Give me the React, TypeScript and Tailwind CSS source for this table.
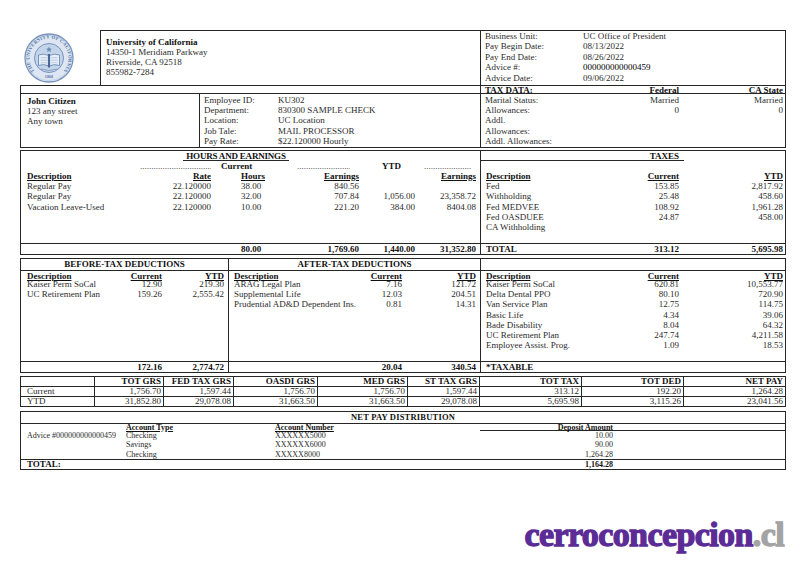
import React from 'react';

function Seal() {
  return (
    <svg width="50" height="50" viewBox="0 0 50 50">
      <defs>
        <path id="sealRing" d="M25,44.5 A19.5,19.5 0 0,1 25,5.5 A19.5,19.5 0 0,1 25,44.5" />
      </defs>
      <circle cx="25" cy="25" r="24" fill="#dde6f2" stroke="#7893bd" strokeWidth="1.3" />
      <circle cx="25" cy="25" r="22.4" fill="none" stroke="#9bb1d2" strokeWidth="0.7" strokeDasharray="0.9 0.7" />
      <text fontSize="4.8" fill="#5677a8" fontFamily="Liberation Serif, serif" fontWeight="bold" letterSpacing="0.3" textAnchor="middle">
        <textPath href="#sealRing" startOffset="50%">
          THE UNIVERSITY OF CALIFORNIA
        </textPath>
      </text>
      <text x="25" y="45" fontSize="4.2" fill="#5677a8" fontFamily="Liberation Serif, serif" fontWeight="bold" textAnchor="middle">
        1868
      </text>
      <circle cx="25" cy="25" r="14.5" fill="#c4d4e9" stroke="#7893bd" strokeWidth="1" />
      <path d="M25 13.5 l0.9 2 2.1 0.2 -1.6 1.4 0.5 2.1 -1.9 -1.1 -1.9 1.1 0.5 -2.1 -1.6 -1.4 2.1 -0.2z" fill="#6f8cb8" />
      <path
        d="M14.5 22 Q19.5 20 25 22.5 Q30.5 20 35.5 22 L35.5 32.5 Q30.5 30.5 25 33 Q19.5 30.5 14.5 32.5 Z"
        fill="#e8eef7"
        stroke="#5f7fae"
        strokeWidth="0.8"
      />
      <path d="M25 21 L25 34.5" stroke="#47679a" strokeWidth="2.2" />
      <path d="M16.5 25 Q20 24 23 25 M16.5 27.5 Q20 26.5 23 27.5 M16.5 30 Q20 29 23 30 M27 25 Q30 24 33.5 25 M27 27.5 Q30 26.5 33.5 27.5 M27 30 Q30 29 33.5 30" stroke="#8ea7cb" strokeWidth="0.5" fill="none" />
      <path d="M17 36 Q25 39 33 36" stroke="#7893bd" strokeWidth="0.8" fill="none" />
    </svg>
  );
}

const emp = [
  ['Employee ID:', 'KU302'],
  ['Department:', '830300 SAMPLE CHECK'],
  ['Location:', 'UC Location'],
  ['Job Tale:', 'MAIL PROCESSOR'],
  ['Pay Rate:', '$22.120000 Hourly'],
];

const biz = [
  ['Business Unit:', 'UC Office of President'],
  ['Pay Begin Date:', '08/13/2022'],
  ['Pay End Date:', '08/26/2022'],
  ['Advice #:', '000000000000459'],
  ['Advice Date:', '09/06/2022'],
];

const taxData = [
  ['Marital Status:', 'Married', 'Married'],
  ['Allowances:', '0', '0'],
  ['Addl.', '', ''],
  ['Allowances:', '', ''],
  ['Addl. Allowances:', '', ''],
];

function TopBlock() {
  return (
    <div className="flex">
      <div className="w-[460px]">
        <div className="flex h-[55px]">
          <div className="w-[80px] pl-[4px] pt-[3px]">
            <Seal />
          </div>
          <div className="flex-1 border-l border-t border-[#262626] pl-[5px] pt-[6px] leading-[10px]">
            <div className="font-bold text-[#111]">University of California</div>
            <div>14350-1 Meridiam Parkway</div>
            <div>Riverside, CA 92518</div>
            <div>855982-7284</div>
          </div>
        </div>
        <div className="h-[8px] border-l border-t border-[#262626]" />
        <div className="flex h-[55px] border-y border-l border-[#262626]">
          <div className="w-[179px] border-r border-[#262626] pl-[6px] pt-[2px] leading-[10px]">
            <div className="font-bold text-[#111]">John Citizen</div>
            <div>123 any street</div>
            <div>Any town</div>
          </div>
          <div className="flex-1 pl-[4px] pt-[1px]">
            {emp.map(([k, v]) => (
              <div key={k} className="grid h-[10.2px] grid-cols-[74px_1fr] whitespace-nowrap leading-[10.2px]">
                <div>{k}</div>
                <div>{v}</div>
              </div>
            ))}
          </div>
        </div>
      </div>
      <div className="h-[118px] w-[306px] border border-[#262626]">
        <div className="h-[55px] border-b border-[#262626] pl-[4px]">
          {biz.map(([k, v]) => (
            <div key={k} className="grid h-[10.4px] grid-cols-[98px_1fr] whitespace-nowrap leading-[10.4px]">
              <div>{k}</div>
              <div className={k === 'Advice #:' ? 'text-black' : ''}>{v}</div>
            </div>
          ))}
        </div>
        <div className="grid h-[8px] grid-cols-[115px_79px_1fr] border-b border-[#262626] pl-[4px] pr-[2px] font-bold leading-[8px] text-[#111]">
          <div>TAX DATA:</div>
          <div className="text-right">Federal</div>
          <div className="text-right">CA State</div>
        </div>
        <div className="pl-[4px] pr-[2px] pt-[1px]">
          {taxData.map(([k, a, b], i) => (
            <div key={i} className="grid h-[10.2px] grid-cols-[115px_79px_1fr] whitespace-nowrap leading-[10.2px]">
              <div>{k}</div>
              <div className="text-right">{a}</div>
              <div className="text-right">{b}</div>
            </div>
          ))}
        </div>
      </div>
    </div>
  );
}

const hc = ['pl-[6px]', 'text-right pr-[1px]', 'pl-[29px]', 'text-right pr-[1px]', 'text-right pr-[1px]', 'text-right pr-[3px]'];
const tc = ['pl-[5px]', 'text-right pr-[1px]', 'text-right pr-[2px]'];

const earnings = [
  ['Regular Pay', '22.120000', '38.00', '840.56', '', ''],
  ['Regular Pay', '22.120000', '32.00', '707.84', '1,056.00', '23,358.72'],
  ['Vacation Leave-Used', '22.120000', '10.00', '221.20', '384.00', '8404.08'],
];

const taxes = [
  ['Fed', '153.85', '2,817.92'],
  ['Withholding', '25.48', '458.60'],
  ['Fed MEDVEE', '108.92', '1,961.28'],
  ['Fed OASDUEE', '24.87', '458.00'],
  ['CA Withholding', '', ''],
];

function HoursBlock() {
  return (
    <div className="mt-[2px] flex w-[766px] border border-[#262626]">
      <div className="w-[460px] border-r border-[#262626]">
        <div className="h-[92px]">
          <div className="flex h-[10px]">
            <div className="ml-[162px] h-[10px] w-[106px] whitespace-nowrap border-b border-[#262626] text-center font-bold leading-[10px] tracking-[-0.2px] text-[#111]">
              HOURS AND EARNINGS
            </div>
          </div>
          <div className="flex h-[10px] whitespace-nowrap leading-[10px]">
            <span className="w-[119px]" />
            <span className="w-[71px] overflow-hidden">{'.'.repeat(40)}</span>
            <span className="w-[86px] pl-[10px] font-bold text-[#111]">Current</span>
            <span className="w-[53px] overflow-hidden">{'.'.repeat(30)}</span>
            <span className="w-[74px] pl-[32px] font-bold text-[#111]">YTD</span>
            <span className="w-[47px] overflow-hidden">{'.'.repeat(30)}</span>
          </div>
          <div className="grid h-[10px] grid-cols-[124px_67px_88px_60px_56px_63px] font-bold leading-[11px] text-[#111]">
            {['Description', 'Rate', 'Hours', 'Earnings', '', 'Earnings'].map((c, i) => (
              <div key={i} className={`whitespace-nowrap ${hc[i]}`}>
                <span className="underline underline-offset-[1px]">{c}</span>
              </div>
            ))}
          </div>
          {earnings.map((row, r) => (
            <div key={r} className="grid h-[10.3px] grid-cols-[124px_67px_88px_60px_56px_63px] leading-[10.3px]">
              {row.map((c, i) => (
                <div key={i} className={`whitespace-nowrap ${hc[i]}`}>
                  {c}
                </div>
              ))}
            </div>
          ))}
        </div>
        <div className="grid h-[11px] grid-cols-[124px_67px_88px_60px_56px_63px] border-t border-[#262626] font-bold leading-[10px] text-[#111]">
          {['', '', '80.00', '1,769.60', '1,440.00', '31,352.80'].map((c, i) => (
            <div key={i} className={`whitespace-nowrap ${hc[i]}`}>
              {c}
            </div>
          ))}
        </div>
      </div>
      <div className="w-[304px]">
        <div className="h-[92px]">
          <div className="h-[10px] w-[203px] border-b border-[#262626] pr-[5px] text-right font-bold leading-[10px] text-[#111]">
            TAXES
          </div>
          <div className="h-[10px]" />
          <div className="grid h-[10px] grid-cols-[119px_80px_105px] font-bold leading-[11px] text-[#111]">
            {['Description', 'Current', 'YTD'].map((c, i) => (
              <div key={i} className={`whitespace-nowrap ${tc[i]}`}>
                <span className="underline underline-offset-[1px]">{c}</span>
              </div>
            ))}
          </div>
          {taxes.map((row, r) => (
            <div key={r} className="grid h-[10.3px] grid-cols-[119px_80px_105px] leading-[10.3px]">
              {row.map((c, i) => (
                <div key={i} className={`whitespace-nowrap ${tc[i]}`}>
                  {c}
                </div>
              ))}
            </div>
          ))}
        </div>
        <div className="grid h-[11px] grid-cols-[119px_80px_105px] border-t border-[#262626] font-bold leading-[10px] text-[#111]">
          {['TOTAL', '313.12', '5,695.98'].map((c, i) => (
            <div key={i} className={`whitespace-nowrap ${tc[i]}`}>
              {c}
            </div>
          ))}
        </div>
      </div>
    </div>
  );
}

const bc = ['pl-[6px]', 'text-right', 'text-right pr-[4px]'];
const ac = ['pl-[5px]', 'text-right', 'text-right pr-[4px]'];

const beforeTax = [
  ['Kaiser Perm SoCal', '12.90', '219.30'],
  ['UC Retirement Plan', '159.26', '2,555.42'],
];
const afterTax = [
  ['ARAG Legal Plan', '7.16', '121.72'],
  ['Supplemental Life', '12.03', '204.51'],
  ['Prudential AD&D Dependent Ins.', '0.81', '14.31'],
];
const taxable = [
  ['Kaiser Perm SoCal', '620.81', '10,553.77'],
  ['Delta Dental PPO', '80.10', '720.90'],
  ['Van Service Plan', '12.75', '114.75'],
  ['Basic Life', '4.34', '39.06'],
  ['Bade Disability', '8.04', '64.32'],
  ['UC Retirement Plan', '247.74', '4,211.58'],
  ['Employee Assist. Prog.', '1.09', '18.53'],
];

function DeductionsBlock() {
  return (
    <div className="mt-[3px] flex w-[766px] border border-[#262626]">
      <div className="w-[208px] border-r border-[#262626]">
        <div className="h-[12px] border-b border-[#262626] text-center font-bold leading-[11px] text-[#111]">
          BEFORE-TAX DEDUCTIONS
        </div>
        <div className="h-[90px]">
          <div className="grid h-[8px] grid-cols-[100px_41px_66px] font-bold leading-[10px] text-[#111]">
            {['Description', 'Current', 'YTD'].map((c, i) => (
              <div key={i} className={`whitespace-nowrap ${bc[i]}`}>
                <span className="underline underline-offset-[1px]">{c}</span>
              </div>
            ))}
          </div>
          {beforeTax.map((row, r) => (
            <div key={r} className="grid h-[10.2px] grid-cols-[100px_41px_66px] leading-[10.2px]">
              {row.map((c, i) => (
                <div key={i} className={`whitespace-nowrap ${bc[i]}`}>
                  {c}
                </div>
              ))}
            </div>
          ))}
        </div>
        <div className="grid h-[11px] grid-cols-[100px_41px_66px] border-t border-[#262626] font-bold leading-[10px] text-[#111]">
          {['', '172.16', '2,774.72'].map((c, i) => (
            <div key={i} className={`whitespace-nowrap ${bc[i]}`}>
              {c}
            </div>
          ))}
        </div>
      </div>
      <div className="w-[252px] border-r border-[#262626]">
        <div className="h-[12px] border-b border-[#262626] text-center font-bold leading-[11px] text-[#111]">
          AFTER-TAX DEDUCTIONS
        </div>
        <div className="h-[90px]">
          <div className="grid h-[8px] grid-cols-[111px_62px_78px] font-bold leading-[10px] text-[#111]">
            {['Description', 'Current', 'YTD'].map((c, i) => (
              <div key={i} className={`whitespace-nowrap ${ac[i]}`}>
                <span className="underline underline-offset-[1px]">{c}</span>
              </div>
            ))}
          </div>
          {afterTax.map((row, r) => (
            <div key={r} className="grid h-[10.2px] grid-cols-[111px_62px_78px] leading-[10.2px]">
              {row.map((c, i) => (
                <div key={i} className={`whitespace-nowrap ${ac[i]}`}>
                  {c}
                </div>
              ))}
            </div>
          ))}
        </div>
        <div className="grid h-[11px] grid-cols-[111px_62px_78px] border-t border-[#262626] font-bold leading-[10px] text-[#111]">
          {['', '20.04', '340.54'].map((c, i) => (
            <div key={i} className={`whitespace-nowrap ${ac[i]}`}>
              {c}
            </div>
          ))}
        </div>
      </div>
      <div className="w-[304px]">
        <div className="h-[12px] border-b border-[#262626]" />
        <div className="h-[90px]">
          <div className="grid h-[8px] grid-cols-[119px_80px_105px] font-bold leading-[10px] text-[#111]">
            {['Description', 'Current', 'YTD'].map((c, i) => (
              <div key={i} className={`whitespace-nowrap ${tc[i]}`}>
                <span className="underline underline-offset-[1px]">{c}</span>
              </div>
            ))}
          </div>
          {taxable.map((row, r) => (
            <div key={r} className="grid h-[10.2px] grid-cols-[119px_80px_105px] leading-[10.2px]">
              {row.map((c, i) => (
                <div key={i} className={`whitespace-nowrap ${tc[i]}`}>
                  {c}
                </div>
              ))}
            </div>
          ))}
        </div>
        <div className="h-[11px] border-t border-[#262626] pl-[5px] font-bold leading-[10px] text-[#111]">*TAXABLE</div>
      </div>
    </div>
  );
}

const sumHead = ['', 'TOT GRS', 'FED TAX GRS', 'OASDI GRS', 'MED GRS', 'ST TAX GRS', 'TOT TAX', 'TOT DED', 'NET PAY'];
const sumRows = [
  ['Current', '1,756.70', '1,597.44', '1,756.70', '1,756.70', '1,597.44', '313.12', '192.20', '1,264.28'],
  ['YTD', '31,852.80', '29,078.08', '31,663.50', '31,663.50', '29,078.08', '5,695.98', '3,115.26', '23,041.56'],
];

function SummaryTable() {
  return (
    <table className="mt-[3px] w-[766px] table-fixed border-collapse">
      <colgroup>
        <col className="w-[74px]" />
        <col className="w-[69px]" />
        <col className="w-[70px]" />
        <col className="w-[84px]" />
        <col className="w-[90px]" />
        <col className="w-[72px]" />
        <col className="w-[102px]" />
        <col className="w-[102px]" />
        <col className="w-[102px]" />
      </colgroup>
      <tbody>
        <tr>
          {sumHead.map((c, i) => (
            <td key={i} className="h-[10px] whitespace-nowrap border border-[#262626] p-0 pr-[2px] text-right font-bold leading-[9px] text-[#111]">
              {c}
            </td>
          ))}
        </tr>
        {sumRows.map((row, r) => (
          <tr key={r}>
            {row.map((c, i) => (
              <td
                key={i}
                className={
                  i === 0
                    ? 'h-[10px] whitespace-nowrap border border-[#262626] p-0 pl-[6px] text-left leading-[9px]'
                    : 'h-[10px] whitespace-nowrap border border-[#262626] p-0 pr-[2px] text-right leading-[9px]'
                }
              >
                {c}
              </td>
            ))}
          </tr>
        ))}
      </tbody>
    </table>
  );
}

const deposits = [
  ['Advice #000000000000459', 'Checking', 'XXXXXX5000', '10.00'],
  ['', 'Savings', 'XXXXXX6000', '90.00'],
  ['', 'Checking', 'XXXXX8000', '1,264.28'],
];

function NetPay() {
  return (
    <div className="mt-[4px] w-[766px] border border-[#262626] text-[8px]">
      <div className="h-[12px] border-b border-[#262626] text-center text-[8.5px] font-bold leading-[11px] tracking-[0.2px] text-[#111]">
        NET PAY DISTRIBUTION
      </div>
      <div className="grid h-[7px] grid-cols-[105px_149px_205px_134px_171px] font-bold leading-[8px] text-[#111]">
        <div />
        <div className="whitespace-nowrap">
          <span className="underline underline-offset-[1px]">Account Type</span>
        </div>
        <div className="whitespace-nowrap">
          <span className="underline underline-offset-[1px]">Account Number</span>
        </div>
        <div className="h-[7px] whitespace-nowrap border-b border-[#262626] pr-[1px] text-right">Deposit Amount</div>
        <div className="h-[7px] border-b border-[#262626]" />
      </div>
      <div className="h-[28px]">
        {deposits.map((row, r) => (
          <div key={r} className="grid h-[9.4px] grid-cols-[105px_149px_205px_134px_171px] leading-[9.4px]">
            <div className="whitespace-nowrap pl-[6px]">{row[0]}</div>
            <div className="whitespace-nowrap">{row[1]}</div>
            <div className="whitespace-nowrap">{row[2]}</div>
            <div className="whitespace-nowrap pr-[1px] text-right">{row[3]}</div>
            <div />
          </div>
        ))}
      </div>
      <div className="grid h-[10px] grid-cols-[105px_149px_205px_134px_171px] border-t border-[#262626] font-bold leading-[9px] text-[#111]">
        <div className="pl-[6px] text-[9px]">TOTAL:</div>
        <div />
        <div />
        <div className="pr-[1px] text-right">1,164.28</div>
        <div />
      </div>
    </div>
  );
}

export default function App() {
  return (
    <div className="h-[580px] w-[806px] overflow-hidden bg-white font-['Liberation_Serif','Times_New_Roman',serif] text-[9px] text-[#2b2b2b]">
      <div className="pl-[20px] pt-[30px]">
        <TopBlock />
        <HoursBlock />
        <DeductionsBlock />
        <SummaryTable />
        <NetPay />
      </div>
      <div className="mt-[48px] flex justify-end pr-[22px]">
        <div className="whitespace-nowrap text-[34px] font-bold leading-[34px] tracking-[-0.6px]">
          <span className="text-[#5b2c96] [-webkit-text-stroke:1.3px_#5b2c96]">cerroconcepcion</span>
          <span className="text-[#a3a3a3] [-webkit-text-stroke:1.3px_#a3a3a3]">.cl</span>
        </div>
      </div>
    </div>
  );
}
